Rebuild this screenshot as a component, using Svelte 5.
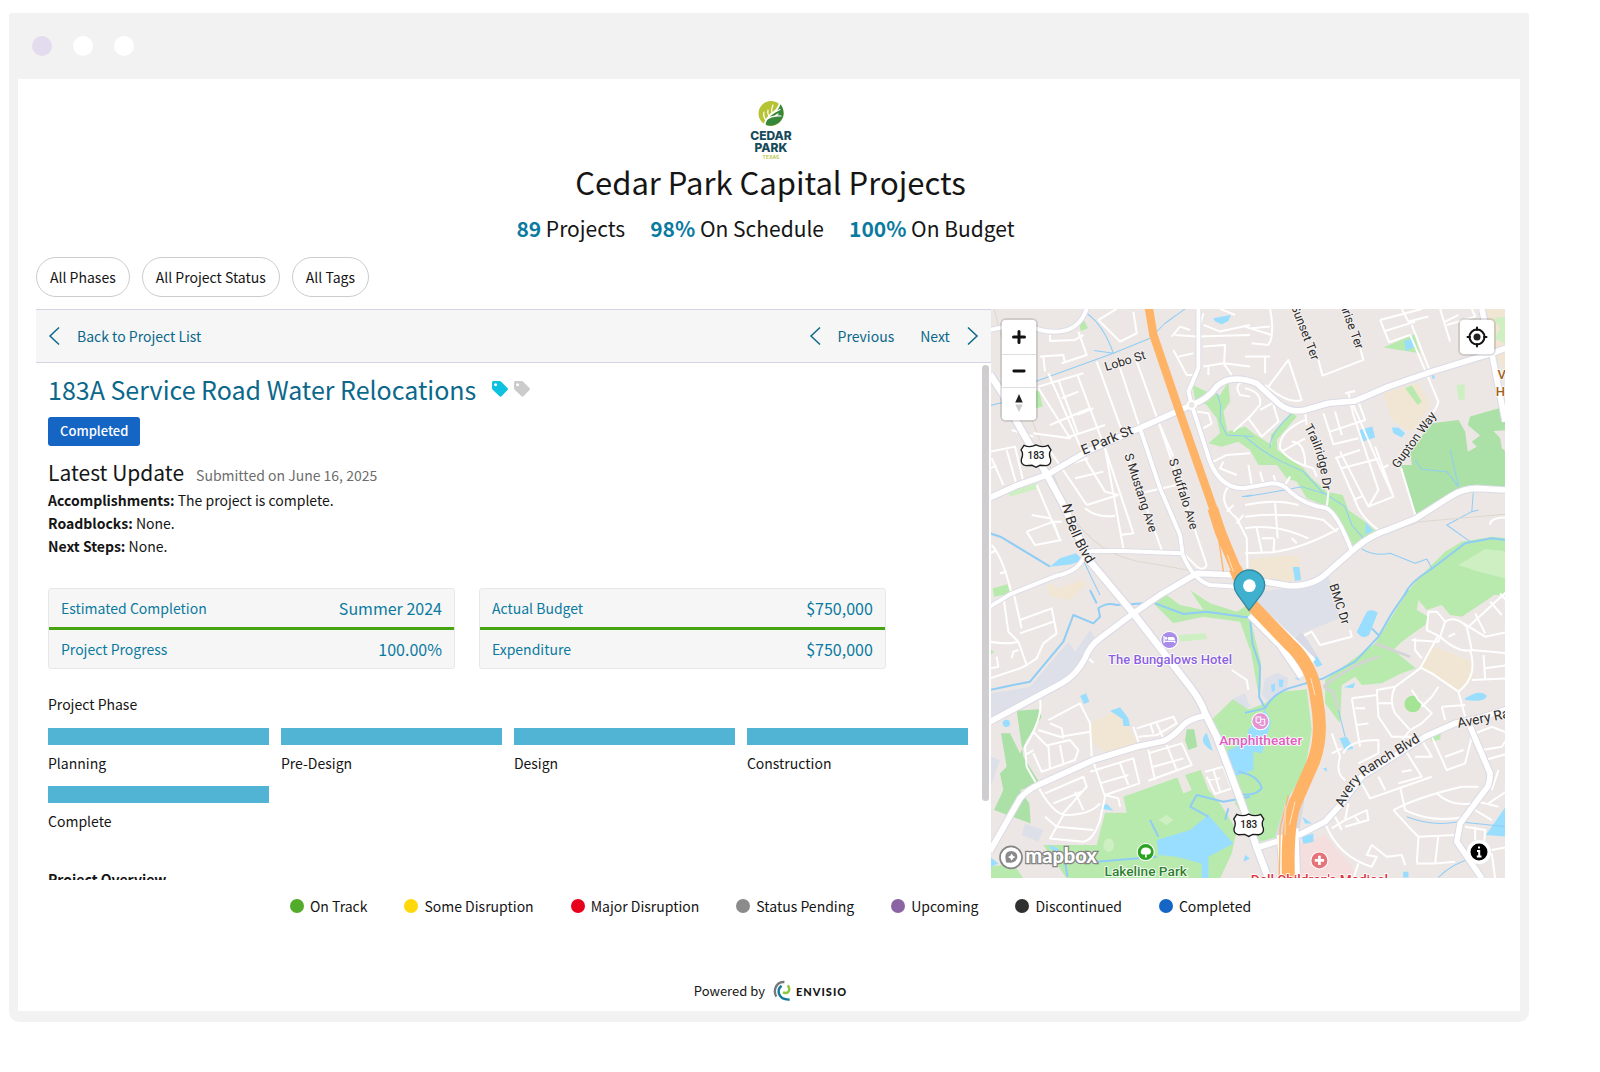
<script>
  const filters = ['All Phases', 'All Project Status', 'All Tags'];
  const stats = [
    { value: '89', label: 'Projects' },
    { value: '98%', label: 'On Schedule' },
    { value: '100%', label: 'On Budget' }
  ];
  const updates = [
    ['Accomplishments:', 'The project is complete.'],
    ['Roadblocks:', 'None.'],
    ['Next Steps:', 'None.']
  ];
  const cards = [
    [['Estimated Completion', 'Summer 2024'], ['Project Progress', '100.00%']],
    [['Actual Budget', '$750,000'], ['Expenditure', '$750,000']]
  ];
  const phases = ['Planning', 'Pre-Design', 'Design', 'Construction', 'Complete'];
  const legend = [
    ['On Track', 'green'],
    ['Some Disruption', 'yellow'],
    ['Major Disruption', 'red'],
    ['Status Pending', 'grey'],
    ['Upcoming', 'purple'],
    ['Discontinued', 'black'],
    ['Completed', 'blue']
  ];

  // Origins of the four map sheets: north-west, north-east, south-west, south-east.
  const sheets = ['translate(0 0)', 'translate(765 0)', 'translate(0 855)', 'translate(765 855)'];

  const areas = [
    ['industry', 0, 'M740 850 L800 860 L900 850 L1015 810 L1050 940 L900 1000 L800 900Z'],
    ['industry', 2, 'M0 310 L120 290 L235 155 L255 185 L300 120 L325 160 L270 230 L215 280 L0 392Z'],
    ['industry', 2, 'M0 497 L30 510 L0 595Z M105 700 L160 720 L145 755 L95 735Z M730 325 L765 310 L780 350 L740 365Z'],
    ['industry', 3, 'M60 265 L100 248 L130 265 L125 300 L70 335 L50 315Z'],
    ['sand', 0, 'M170 835 L190 840 L210 850 L280 822 L290 838 L240 885 L180 875Z'],
    ['sand', 1, 'M415 265 L520 232 L556 300 L500 382 L440 345Z M15 762 L160 750 L172 825 L110 832 L15 820Z M722 12 L790 12 L790 220 L750 150Z'],
    ['sand', 2, 'M302 398 L395 355 L440 462 L350 488 L302 455Z'],
    ['sand', 3, 'M562 168 L675 212 L685 262 L640 305 L527 230Z'],
    ['park', 0, 'M268 55 L282 46 L294 70 L272 78Z M130 255 L148 260 L158 305 L130 312Z M8 850 L52 838 L62 866 L12 875Z'],
    ['park', 0, 'M608 240 L645 258 L690 270 L715 230 L720 290 L700 320 L712 380 L765 365 L790 385 L845 420 L842 390 L905 322 L920 335 L860 405 L862 435 L940 490 L965 520 L1010 560 L1058 570 L1075 615 L1125 650 L1160 680 L1090 726 L1060 665 L1045 660 L1045 645 L1000 600 L950 580 L920 530 L890 520 L860 480 L805 480 L780 435 L745 410 L695 425 L655 415 L690 385 L680 340 L650 300 L615 285Z'],
    ['pale', 0, 'M55 562 L140 535 L146 550 L60 575Z M565 990 L645 985 L652 1002 L570 1010Z'],
    ['park', 1, 'M415 128 L508 88 L525 145Z M480 250 L500 242 L530 290 L518 300Z M480 870 L520 820 L600 740 L650 710 L740 695 L790 700 L790 870Z'],
    ['wood', 1, 'M562 355 L640 345 L660 380 L668 440 L695 425 L680 410 L705 392 L668 360 L675 335 L790 302 L790 375 L745 378 L765 400 L770 430 L790 445 L790 545 L690 545 L615 575 L515 635 L468 480 L500 480 L495 435Z'],
    ['pale', 1, 'M635 240 L658 237 L660 283 L640 285Z M745 40 L790 35 L790 120 L750 100 L765 70Z M640 780 L720 732 L790 740 L790 822 L700 800Z'],
    ['park', 2, 'M490 40 L530 15 L570 45 L640 60 L600 0 L660 40 L740 65 L780 40 L780 180 L750 95 L640 80 L550 100Z M0 175 L12 185 L0 195Z'],
    ['wood', 2, 'M80 362 L145 358 L155 380 L110 450 L90 490 L60 430 L33 430 L50 530 L30 550 L40 600 L12 660 L122 700 L118 640 L90 600 L150 580 L100 500Z M590 418 L612 418 L622 470 L595 480 L585 450Z'],
    ['park', 2, 'M655 398 L728 328 L790 368 L790 640 L740 590Z M400 620 L562 562 L580 610 L605 600 L585 555 L632 540 L655 600 L690 640 L740 720 L725 790 L690 865 L230 865 L160 765 L320 765 L345 668 L410 668Z M0 830 L70 820 L100 865 L0 865Z'],
    ['park', 3, 'M-20 370 L60 340 L110 305 L185 298 L200 420 L180 540 L120 640 L100 740 L45 755 L-30 640Z M0 80 L18 95 L48 220 L45 320 L38 300 L15 170Z M490 0 L740 0 L790 -30 L740 20 L650 80 L615 75 L590 45 L545 60 L520 30 L515 60 L550 80 L540 105 L505 130 L470 155 L445 180 L512 235 L470 250 L410 280 L350 285 L330 260 L290 285 L285 400 L240 340 L240 270 L390 160Z M555 435 L588 425 L585 448 L560 455Z'],
    ['bright', 3, 'M478 342 a25 25 0 1 0 50 0 a25 25 0 1 0 -50 0Z'],
    ['pale', 2, 'M505 690 L530 675 L550 690 L530 705Z M340 765 a16 20 0 1 0 32 0 a16 20 0 1 0 -32 0Z'],
    ['clinic', 3, 'M160 760 L240 735 L320 830 L330 865 L160 865Z'],
    ['lake', 0, 'M670 40 L722 30 L715 48 L695 58 L675 50Z M180 785 L210 760 L258 745 L278 765 L245 778Z'],
    ['lake', 1, 'M478 108 L502 100 L510 125 L482 138Z M342 375 L382 365 L390 398 L352 410Z M440 368 L460 368 L480 385 L470 398 L445 385Z M560 210 L568 212 L568 222 L561 220Z M143 786 L163 786 L168 825 L150 828Z M362 650 L383 678 L360 688Z'],
    ['lake', 2, 'M270 318 L288 310 L298 335 L282 342Z M360 362 L390 352 L415 385 L420 408 L400 408 L398 388Z M38 400 a10 10 0 1 0 22 0 a10 10 0 1 0 -22 0Z M650 428 Q620 455 668 483Z M330 655 L350 640 L370 662Z M500 750 L600 720 L655 675 L730 760 L655 800 L655 865 L635 865 L635 820 L560 800 L505 795Z M715 480 L740 470 L790 430 L790 540 L730 560 L712 520Z M0 800 L25 820 L0 832Z M178 765 L205 775 L205 790 L180 775Z M765 795 L780 805 L760 815Z'],
    ['lake', 3, 'M365 65 Q380 55 398 68 L372 135 Q350 150 335 125Z M170 152 L185 148 L232 225 L215 232Z M283 445 L305 440 L325 475 L300 482Z M296 292 L330 278 L325 295Z M660 325 Q705 295 725 318 Q720 338 660 330Z M785 645 L785 740 L722 735Z M170 740 L205 730 L205 755 L175 762Z M172 680 L200 700 L180 700Z M10 420 L60 360 L78 395 L50 490 L5 480Z M78 285 L90 280 L90 303 L80 305Z M100 268 L116 270 L112 292 L102 290Z M233 535 L245 533 L245 545Z M474 845 L490 845 L490 862 L474 862Z M148 265 L162 262 L164 272Z']
  ];

  const streams = [
    ['thin', 0, 'M130 232 L370 145 L480 100 L525 55 L585 12 M290 25 Q340 60 370 145 M312 137 L370 145 M0 302 L40 292 M680 265 L692 300 L690 350 L710 390 L790 395'],
    ['thin', 0, 'M280 765 Q300 810 330 870 M755 575 L785 570'],
    ['mid', 0, 'M0 685 L35 697 L180 785'],
    ['thin', 1, 'M0 395 Q50 440 110 470 L175 500 L230 560 L300 605 L320 660 L355 700 M75 430 Q70 390 140 325 M0 575 L90 560 L170 545 L250 570 M510 465 L530 493 L605 500 L640 545 M615 435 L628 490 L640 545 M685 555 L680 620 L700 615 M680 620 L605 660 L675 710 M350 732 Q390 755 435 745 L510 775 L545 762 L560 790'],
    ['mid', 1, 'M478 870 Q495 830 555 795 L660 715 L740 700 L790 706'],
    ['mid', 2, 'M0 300 L45 290 L120 275 L220 155 L250 75 L310 100 L330 80 L325 55 Q350 35 380 45 L490 38 L580 72 L650 65 L790 85 M320 40 L300 0 M600 650 L620 615 L700 635 L780 620 M600 650 L655 680 M705 690 L715 655 M500 800 L320 815 L225 810 M225 810 L232 860 M480 690 L505 740'],
    ['mid', 3, 'M488 0 L440 70 L400 140 L330 215 L235 265 L130 295 Q80 315 60 355 L0 368 M0 80 L15 85 L22 160 L45 230 L42 320 L60 355 M400 135 L380 115 M-20 545 Q40 555 50 595 Q30 620 -20 612'],
    ['thin', 3, 'M280 360 L300 440 M485 680 Q560 710 640 695 L790 710 M580 862 Q620 820 680 805']
  ];

  const lanes = [
    [0, 'M130 395 L65 375 M175 205 L290 470 L345 560 L385 570 M205 225 L265 390 M262 210 L345 430 L430 685 L390 690 M145 245 L262 210 L280 205 M320 170 L400 390 M385 175 L450 370 M440 170 L505 350 L550 455 M505 350 L650 780 Q640 800 620 785 L580 745 M410 445 L515 735 M345 430 L400 730 M145 250 L240 400 L130 385 M215 280 L265 260 M262 330 L310 310 M180 360 L300 310 M225 400 L345 360 M0 440 L75 425 L100 530 M50 435 L80 540 M5 460 L40 540 M0 490 L20 482'],
    [0, 'M175 430 L290 600 M230 480 L295 460 M255 520 L340 500 M290 600 L385 570 M285 610 Q320 640 375 632 M140 540 L210 705 M110 680 L190 650 L215 650 M110 680 L135 720 L215 705 M125 630 L180 640 M190 650 L210 705 M450 565 L560 540 M5 720 Q40 760 65 868 M0 745 L20 735 M30 805 L50 800'],
    [0, 'M180 90 L180 108 L255 105 L280 90 M150 155 L220 150 L225 175 M160 155 L165 200 M265 80 L290 150 L215 175 M325 45 L390 110 L440 85 L430 20 M325 45 L380 12 M640 25 L620 95 M555 90 L620 95 L780 90 M550 135 L590 210 L620 210 M565 155 L610 145 M640 125 L705 120 L702 175 L640 185 M702 175 L780 185 M655 185 L655 210 M700 175 L725 210 M640 60 L690 80 L780 60 M735 30 L690 12 M600 75 L570 65 L545 95 M620 320 L655 325 L665 355 L640 370 M780 335 L730 380 M700 470 L690 490 L740 510 M670 470 L710 450 L780 445 M760 230 Q730 240 750 270 L780 275'],
    [0, 'M715 545 Q680 590 740 640 L770 700 L772 790 M710 620 L730 600 M740 655 L760 630'],
    [1, 'M0 65 L80 90 M0 155 L75 155 M60 155 L60 205 M70 245 L130 165 L170 285 Q130 300 60 240 M0 250 Q50 260 45 300 L10 340 M45 315 L90 290 M10 340 L50 395 L100 350 L85 300 M75 12 Q90 90 70 120 L20 115 M20 70 L75 65 M220 165 L232 212 L355 165 L345 130 M470 12 L490 50 L550 35 M405 45 L530 12 M405 45 L432 112 L495 90 L580 290 Q570 325 550 330 M420 78 L510 50 M500 60 L555 200 M585 12 L615 110 M600 50 L640 30 M680 12 L690 35 L605 60'],
    [1, 'M180 320 L185 360 M310 265 L325 330 L400 555 L370 605 L285 440 M300 265 L330 258 M320 290 L395 465 L445 575 L370 605 M235 325 L265 418 L340 400 M270 320 L290 390 M255 380 L360 345 L340 290 M270 460 L345 435 M275 460 L330 585 Q345 635 400 675 M325 585 L355 572 M290 490 L405 460 M390 425 L445 575 M415 488 L430 480 M180 345 Q100 380 105 430 Q130 470 205 490 L215 515 M110 440 L180 400 M140 410 Q180 410 180 480 M468 490 L512 635 M245 608 L250 560'],
    [1, 'M0 600 Q90 580 160 600 M0 635 Q130 620 235 645 L275 680 M90 595 L98 700 M0 670 Q90 655 190 700 M0 745 L80 742 Q180 730 290 665 M35 670 L50 740 M50 700 L85 700 M85 742 L88 700 M140 700 L155 715 M735 660 Q735 635 790 638 M10 480 L20 540 M45 500 L55 535 M85 510 L95 540 M120 540 L135 515'],
    [2, 'M40 20 L55 125 L85 155 L110 225 L140 205 L160 160 L200 130 L185 55 L90 90 M70 5 L95 115 M90 130 L190 95 M85 155 Q50 165 0 155 M0 265 L90 235 L110 225 M0 235 L25 230 L20 200 M65 205 L70 185 L85 180'],
    [2, 'M150 330 Q160 380 105 470 L110 530 L150 600 Q190 670 225 675 Q300 675 330 640 M175 390 L270 340 L300 400 L305 500 M145 420 L210 440 L300 425 M130 425 Q180 480 175 465 L240 450 L265 480 L255 510 L155 545 L130 490 M175 465 L180 535 M210 465 L220 520 M180 400 L215 415 L220 445 M105 495 L130 480 M165 610 L280 560 L290 590 L215 675 M190 640 L275 605 M310 515 L345 620 L330 690 Q310 750 280 755 L180 745 L220 675 M345 615 L385 625 L390 650 M300 545 L430 505 L448 580 L345 615 M330 580 L415 555 M390 520 L415 585 M165 680 L200 710 L310 720 M255 605 L280 660'],
    [2, 'M430 410 L445 455 M440 415 L550 380 L560 400 L500 435 L445 440 M500 400 L520 445 M475 480 L495 570 M475 490 L575 460 L605 525 L475 572 M530 465 L560 540 M490 530 L580 505 M480 400 L490 430 M725 240 L770 270 L775 300 M290 200 L310 218 M645 545 L700 530 L725 595 L675 612 L650 560 M655 570 L690 565 M670 540 L690 605'],
    [3, 'M160 145 L200 125 L225 165 L320 140 L315 120 M500 150 L580 155 L600 95 Q630 75 665 110 L680 180 Q640 190 585 140 L545 120 L550 65 L575 65 L600 95 M510 145 L510 180 L530 205 M670 110 L790 0 M690 70 L720 130 M655 100 L720 140 L790 125 M680 180 L790 190 M715 195 L720 265 M720 235 L790 225 M680 270 L790 265 M610 140 L630 130 M765 10 L790 40 M735 35 L770 75'],
    [3, 'M580 135 L525 235 L450 290 Q430 330 450 370 L495 420 L530 400 L560 370 L520 330 L500 300 M675 180 Q700 260 640 305 L560 250 L525 232 M640 305 L660 380 M590 350 L660 345 M560 320 L580 290 M450 290 L395 300 L400 380 L440 440 L500 440 M320 325 L395 315 M320 325 L345 470 M330 355 L360 355 M335 405 L370 400 M495 420 L470 450 M400 340 L440 340 M560 320 L530 350 M590 350 L600 390'],
    [3, 'M260 430 L285 500 Q270 550 300 570 M295 490 Q310 450 400 450 L400 490 L340 520 M260 490 L290 475 M480 480 L530 560 L460 580 M350 580 L375 625 L560 560 M400 560 L420 600 M500 540 L470 545 M530 450 L560 500 L510 500 M560 440 L605 540 L660 520 L680 440 M600 500 L655 480 M690 430 L740 410 L790 430 M710 480 L770 470 L790 440 M720 510 L790 490'],
    [3, 'M445 660 Q520 620 650 590 L700 590 M445 660 L500 720 L520 740 L515 820 M465 590 L480 660 Q560 700 660 680 M575 610 Q620 650 680 640 M520 740 L630 735 M580 735 L570 820 L630 815 M515 820 L570 820 M660 710 L720 720 L715 790 M690 710 L690 750 M740 780 L790 770 M740 790 L750 865 M700 635 L760 650 M690 660 L740 690 M760 540 L740 600 M790 600 L730 640 M240 700 Q280 800 380 830 L395 800 L365 795 L380 765 L425 800 L470 795 L480 825 M300 690 L365 660 L370 690 L300 710 M260 715 L300 690 L310 640 M270 680 L290 720 M330 680 L345 700 M325 865 L340 820']
  ];

  const roads = [
    ['minor', 'M0 75 L60 62 Q120 62 150 75 Q260 100 290 12'],
    ['minor', 'M625 12 L625 190 L595 260 L605 300 L650 440 Q680 550 760 550 L845 535 Q880 535 900 560 Q945 600 1005 608 Q1040 620 1085 738'],
    ['minor', 'M450 370 L510 550 L570 690 L578 750 Q610 825 660 840 L740 845'],
    ['minor', 'M0 905 L60 868 L200 812 Q260 800 280 760 Q285 740 310 738 L400 738 L575 745'],
    ['medium', 'M0 578 L80 542 L170 510 L290 440 L430 378 L605 300 Q650 285 680 245 Q720 205 800 235 L865 295 Q900 325 945 315 L1015 295 L1095 288 L1195 245 L1325 200 L1505 145 L1560 125'],
    ['medium', 'M0 1250 L215 1135 Q260 1110 285 1060 Q300 1020 330 1000 L430 925 L510 870 L620 805 L740 810 L825 830 L895 842 Q970 845 1015 800 L1095 730 Q1140 690 1200 672 L1275 642 L1385 572 Q1420 550 1460 550 L1560 556'],
    ['medium', 'M0 1638 L90 1480 Q110 1455 150 1437 L310 1365 L440 1325 L520 1308 Q550 1295 580 1260 Q600 1240 645 1232'],
    ['medium', 'M800 1628 L930 1588 L1005 1550 L1055 1495 L1115 1415 L1305 1295 L1395 1255 L1465 1240 L1560 1210'],
    ['medium', 'M1475 12 L1505 145 L1545 350'],
    ['medium', 'M1440 1265 L1500 1405 Q1500 1440 1485 1455 L1410 1555 L1400 1610 L1475 1720'],
    ['large', 'M0 208 L40 270 L80 350 L160 490 L215 590 L300 770 L430 925 L600 1145 Q635 1190 645 1225 L680 1295 L770 1535 L800 1628 L835 1720']
  ];

  const highway = 'M475 0 L490 90 L565 310 L610 440 L680 640 L735 790 L785 900 L895 1015 Q970 1080 980 1185 Q1000 1290 970 1370 L915 1495 Q890 1560 895 1720';
</script>

{#snippet shield(x, y)}
  <g transform="translate({x} {y})">
    <path class="shield" d="M-36 -32 Q-18 -24 0 -33 Q18 -24 36 -32 L45 -18 Q36 -6 44 10 Q46 26 30 29 L12 28 L0 34 L-12 28 L-30 29 Q-46 26 -44 10 Q-36 -6 -45 -18Z" />
    <text class="shield-text" y="10">183</text>
  </g>
{/snippet}

{#snippet chevron(dir)}
  <svg class="chevron" viewBox="0 0 12 20" aria-hidden="true">
    <path d={dir === 'left' ? 'M11 1.500 L2 10 L11 18.500' : 'M1 1.500 L10 10 L1 18.500'} />
  </svg>
{/snippet}

{#snippet tag(tone)}
  <svg class="tag {tone}" viewBox="0 0 16 16" aria-hidden="true">
    <path fill-rule="evenodd" d="M1.500 0 H7.500 Q8.500 0 9.200.7 L15.500 7 Q16.400 8 15.500 9 L9.500 15.300 Q8.500 16.200 7.500 15.300 L.700 8.800 Q0 8 0 7.200 V1.500 Q0 0 1.500 0Z M3.600 2.200 a1.500 1.500 0 1 0 .010 0Z" />
  </svg>
{/snippet}

<div class="window">
  <div class="titlebar">
    <span class="dot lilac"></span><span class="dot"></span><span class="dot"></span>
  </div>

  <div class="page">
    <header>
      <svg class="city-logo" viewBox="0 0 48 60" role="img" aria-label="Cedar Park, Texas">
        <circle cx="24" cy="12.500" r="12.500" fill="#b5c334" />
        <path d="M33.500 3 Q38 9 36 16 Q31 27 19 24 Q18 19 21 16 Q31 12 33.500 3Z" fill="#37873a" />
        <g fill="none" stroke="#fff" stroke-linecap="round">
          <path d="M17 25 Q19 16 27 11 Q31 8 33 2" stroke-width="1.800" />
          <path d="M19 19 Q16 16 17 11 M25 12 Q24 8 26 4 M22 15 Q20 12 21 9 M24 13 L33 8.500 M20 18 Q26 14 34 15 M27 15.500 L31 13" stroke-width="1.200" />
        </g>
        <text class="city" x="24" y="39">CEDAR</text>
        <text class="city" x="24" y="51">PARK</text>
        <text class="state" x="24" y="58">TEXAS</text>
      </svg>
      <h1>Cedar Park Capital Projects</h1>
      <ul class="stats">
        {#each stats as s}
          <li><strong>{s.value}</strong> {s.label}</li>
        {/each}
      </ul>
    </header>

    <div class="filters">
      {#each filters as f}<button type="button">{f}</button>{/each}
    </div>

    <main>
      <section class="panel">
        <nav>
          <a href="#list">{@render chevron('left')}Back to Project List</a>
          <span class="pager">
            <a href="#previous">{@render chevron('left')}Previous</a>
            <a href="#next">Next{@render chevron('right')}</a>
          </span>
        </nav>
        <div class="detail">
          <div class="name">
            <h2>183A Service Road Water Relocations</h2>
            <span class="tags">{@render tag('cyan')}{@render tag('silver')}</span>
          </div>
          <span class="badge">Completed</span>
          <div class="latest">
            <h3>Latest Update</h3>
            <span>Submitted on June 16, 2025</span>
          </div>
          {#each updates as [k, v]}
            <p><strong>{k}</strong> {v}</p>
          {/each}
          <div class="cards">
            {#each cards as rows}
              <dl>
                {#each rows as [k, v]}
                  <div><dt>{k}</dt><dd>{v}</dd></div>
                {/each}
              </dl>
            {/each}
          </div>
          <h4>Project Phase</h4>
          <ul class="phases">
            {#each phases as p}<li><span class="bar"></span>{p}</li>{/each}
          </ul>
          <h4 class="overview">Project Overview</h4>
        </div>
        <span class="scroll"></span>
      </section>

      <section class="map" aria-label="Project map">
        <svg class="canvas" viewBox="3 12 1542 1707" preserveAspectRatio="xMidYMid slice">
          {#each areas as [kind, sheet, d]}
            <path class={kind} transform={sheets[sheet]} {d} />
          {/each}
          {#each streams as [kind, sheet, d]}
            <path class="stream {kind}" transform={sheets[sheet]} {d} />
          {/each}
          <path class="rail" d="M12 12 L50 150 L230 610 Q320 760 480 775 L620 800 M1120 710 L1290 650 L1545 628" />
          <path class="trail" d="M1000 1145 Q1080 1080 1165 1055 M1000 1145 L1030 1160 L1045 1215 M1155 1015 L1260 1055" />
          {#each lanes as [sheet, d]}
            <path class="lane" transform={sheets[sheet]} {d} />
          {/each}
          {#each roads as [size, d]}<path class="casing {size}" {d} />{/each}
          <path class="casing large" d="M780 930 L870 1020 L935 1115 M925 990 L970 1060 M905 1480 L870 1590 L880 1720 M930 1480 L915 1570 L920 1720" />
          {#each roads as [size, d]}<path class="road {size}" {d} />{/each}
          <path class="road large" d="M780 930 L870 1020 L935 1115 M800 905 L900 1000 L970 1070 M870 1590 L880 1720 M915 1570 L920 1720" />
          <circle class="roundabout" cx="605" cy="300" r="12" />
          <path class="highway" d={highway} />
          <path class="highway wide" d="M735 790 L785 900 L895 1015 Q970 1080 980 1185 Q1000 1290 970 1370 L915 1495 Q890 1560 895 1720" />
          <path class="highway merge" d="M668 610 L690 680 L745 810 L770 860" />
          <path class="ramp" d="M684 690 L700 800 M895 1470 L870 1570 L868 1720" />
          <path class="seam" d="M885 1500 L885 1590 M962 1120 L975 1170 M915 1490 L898 1560 M712 750 L730 800 M745 850 L775 895" />

          <g class="label">
            <text class="small" transform="translate(405 168) rotate(-17)">Lobo St</text>
            <text transform="translate(350 404) rotate(-23)">E Park St</text>
            <text class="small" transform="translate(452 563) rotate(72)">S Mustang Ave</text>
            <text class="small" transform="translate(580 567) rotate(73)">S Buffalo Ave</text>
            <text class="small" transform="translate(945 82) rotate(69)">Sunset Ter</text>
            <text class="small" transform="translate(1078 44) rotate(70)">Sunrise Ter</text>
            <text class="small" transform="translate(1272 405) rotate(-54)">Gupton Way</text>
            <text class="small" transform="translate(1048 897) rotate(72)">BMC Dr</text>
            <text transform="translate(1512 1232) rotate(-11)">Avery Ranch</text>
            <path id="bell" d="M216 600 Q236 700 310 804" fill="none" />
            <path id="trail" d="M942 366 Q998 460 1000 590" fill="none" />
            <path id="avery" d="M1060 1508 Q1090 1430 1150 1395 L1325 1287" fill="none" />
            <text class="along"><textPath href="#bell">N Bell Blvd</textPath></text>
            <text class="along small"><textPath href="#trail">Trailridge Dr</textPath></text>
            <text class="along"><textPath href="#avery">Avery Ranch Blvd</textPath></text>
          </g>
          <text class="poi brown" x="1535" y="223">V</text>
          <text class="poi brown" x="1531" y="273">H</text>

          {@render shield(138, 453)}
          {@render shield(776, 1560)}

          <circle cx="538" cy="1005" r="27" fill="#fff" />
          <circle cx="538" cy="1005" r="24" fill="#a98be8" />
          <path d="M522 993 V1014 M522 1009 H554 V1014" fill="none" stroke="#fff" stroke-width="4" />
          <path d="M534 996 H548 Q555 997 555 1006 H534Z" fill="#fff" />
          <circle cx="528" cy="1000" r="4" fill="#fff" />
          <text class="poi violet" x="540" y="1077">The Bungalows Hotel</text>

          <circle cx="811" cy="1249" r="27" fill="#fff" />
          <circle cx="811" cy="1249" r="24" fill="#e493d3" />
          <path d="M798 1236 H812 V1250 Q805 1258 798 1250Z M812 1243 H824 V1259 Q817 1265 809 1257 M802 1241 v2 M808 1241 v2 M814 1250 v2 M820 1250 v2" fill="none" stroke="#fff" stroke-width="3" />
          <text class="poi wide pink" x="812" y="1320">Amphitheater</text>

          <circle cx="467" cy="1641" r="27" fill="#fff" />
          <circle cx="467" cy="1641" r="24" fill="#2ba31f" />
          <path d="M465 1657 V1648 H458 Q450 1646 453 1637 Q456 1626 468 1627 Q481 1627 483 1638 Q483 1647 476 1648 H470 V1657Z" fill="#fff" />
          <text class="poi wide forest" x="467" y="1712">Lakeline Park</text>

          <circle cx="988" cy="1666" r="27" fill="#fff" />
          <circle cx="988" cy="1666" r="24" fill="#e5737a" />
          <path d="M988 1652 V1680 M974 1666 H1002" stroke="#fff" stroke-width="8" />
          <text class="poi wide crimson" x="988" y="1738">Dell Children's Medical</text>

          <g>
            <path d="M777 916 L742 868 Q732 855 732 841 A46 46 0 0 1 824 841 Q824 855 814 868Z" fill="#3fb1ce" stroke="#31899f" stroke-width="4" />
            <circle cx="778" cy="842" r="19" fill="#fff" />
          </g>

          <g>
            <circle cx="63" cy="1657" r="33" fill="#fff" stroke="#858585" stroke-width="5" />
            <path d="M48 1672 L46 1655 Q47 1639 63 1638 Q82 1640 82 1656 Q80 1671 64 1673Z" fill="#8a8a8a" />
            <path d="M65 1645 L69 1652 L76 1656 L69 1660 L65 1667 L61 1660 L54 1656 L61 1652Z" fill="#fff" />
            <text class="brand" x="106" y="1674">mapbox</text>
          </g>
        </svg>

        <div class="zoom">
          <button type="button" aria-label="Zoom in">
            <svg viewBox="0 0 34 34"><path d="M17 11.500 V22.500 M11.500 17 H22.500" /></svg>
          </button>
          <button type="button" aria-label="Zoom out">
            <svg viewBox="0 0 34 34"><path d="M11.500 17 H22.500" /></svg>
          </button>
          <button type="button" aria-label="Reset bearing">
            <svg viewBox="0 0 34 34"><path class="north" d="M17 6.500 L21 15.500 H13Z" /><path class="south" d="M13 17.500 H21 L17 25.500Z" /></svg>
          </button>
        </div>
        <button class="locate" type="button" aria-label="Find my location">
          <svg viewBox="0 0 34 34">
            <circle cx="17" cy="17" r="7.500" /><circle class="core" cx="17" cy="17" r="3.500" />
            <path d="M17 7.500 V10 M17 24 V26.500 M7.500 17 H10 M24 17 H26.500" />
          </svg>
        </button>
        <button class="info" type="button" aria-label="Map attribution">
          <svg viewBox="0 0 24 24">
            <circle cx="12" cy="12" r="8.500" /><path d="M12 6.500 V8.500 M10 11 H12.200 V16.500 M9.800 16.500 H14.500" />
          </svg>
        </button>
      </section>
    </main>

    <ul class="legend">
      {#each legend as [name, tone]}
        <li><span class="status {tone}"></span>{name}</li>
      {/each}
    </ul>

    <footer>
      <span>Powered by</span>
      <svg class="envisio" viewBox="0 0 20 22" aria-hidden="true">
        <path d="M12 1.500 Q5 1 2.500 8 Q1 13 3.500 17" stroke="#77787b" />
        <path d="M9 5.500 Q4.500 9 6.500 14.500 Q9 20.500 17.500 20" stroke="#15779b" />
        <path d="M15.500 5 Q18.500 9 16 12 Q13.500 14 10.500 12.500" stroke="#8cc63f" />
      </svg>
      <b>ENVISIO</b>
    </footer>
  </div>
</div>

<style>
  :global(body) { background: #fff; }
  .window, button {
    font-family: 'Noto Sans CJK SC', 'Noto Sans', sans-serif;
    font-size: 14px;
    line-height: 24px;
    color: #151515;
  }
  ul, dl, dd, h1, h2, h3, h4, p { margin: 0; padding: 0; font-weight: 400; }
  ul { list-style: none; }
  a { color: #0b688b; text-decoration: none; }
  .window { margin: 13px 71px 48px 9px; padding: 0 9px 11px; background: #f2f2f2; border-radius: 3px 3px 10px 10px; }
  .titlebar { display: flex; align-items: center; gap: 21px; height: 66px; padding-left: 14px; }
  .dot { width: 20px; height: 20px; border-radius: 50%; background: #fff; }
  .dot.lilac { background: #e2dcee; }
  .page { background: #fff; padding: 22px 15px 8px 18px; }

  header { display: flex; flex-direction: column; align-items: center; }
  .city-logo { width: 48px; height: 60px; }
  .city { font: 800 12px Inter, sans-serif; fill: #174a5b; text-anchor: middle; }
  .state { font: 600 5px Inter, sans-serif; fill: #b5c334; text-anchor: middle; }
  h1 { font-size: 31px; line-height: 42px; }
  .stats { display: flex; gap: 25px; margin: 8px 10px 12px 0; font-size: 21px; line-height: 34px; }
  .stats strong { color: #0b7aa0; }

  .filters { display: flex; gap: 12px; margin-bottom: 12px; }
  .filters button { height: 40px; padding: 0 13px; border: 1px solid #ccc; border-radius: 20px; background: #fff; }

  main { display: grid; grid-template-columns: 13fr 7fr; height: 571px; }
  .panel { position: relative; display: flex; flex-direction: column; overflow: hidden; }
  nav { display: flex; justify-content: space-between; padding: 14px 12px; background: #f6f6f6; border-top: 1px solid #d3d5e4; border-bottom: 1px solid #d3d5e4; }
  nav a { display: flex; align-items: center; gap: 17px; }
  .pager { display: flex; gap: 26px; }
  .chevron { width: 12px; height: 20px; fill: none; stroke: #0b688b; stroke-width: 1.500; }
  .detail { flex: 1; min-height: 0; overflow: hidden; padding: 8px 23px 0 12px; }
  .name { display: flex; align-items: center; gap: 16px; }
  h2 { font-size: 25px; line-height: 36px; color: #0b688b; }
  .tags { display: flex; gap: 6px; }
  .tag { width: 16px; height: 16px; }
  .cyan { fill: #0cc2de; }
  .silver { fill: #cbcbcb; }
  .badge { display: inline-block; margin-top: 10px; padding: 2px 12px 3px; border-radius: 3px; background: #1565c5; color: #fff; font-size: 13px; font-weight: 500; }
  .latest { display: flex; align-items: baseline; gap: 12px; margin: 10px 0 1px; }
  h3 { font-size: 21px; line-height: 32px; }
  .latest span { color: #6d6d6d; }
  p { line-height: 23px; }
  .cards { display: flex; gap: 24px; margin: 30px 82px 23px 0; }
  dl { flex: 1; border: 1px solid #e8e8e8; border-radius: 3px; background: #f6f6f6; color: #0b7aa0; }
  dl div { display: flex; justify-content: space-between; align-items: center; height: 38px; padding: 0 12px; }
  dl div + div { border-top: 3px solid #47a411; }
  dd { font-size: 16px; }
  .phases { display: grid; grid-template-columns: repeat(4, 1fr); gap: 11px 12px; margin-top: 12px; }
  .bar { display: block; height: 17px; margin-bottom: 6px; background: #51b4d5; }
  h4 { font-size: 14px; line-height: 24px; }
  .overview { margin-top: 34px; font-weight: 700; }
  .scroll { position: absolute; top: 56px; right: 2px; width: 7px; height: 436px; border-radius: 4px; background: #cfcdcf; }

  .map { position: relative; height: 569px; overflow: hidden; background: #ece7e5; }
  .canvas { display: block; width: 100%; height: 100%; }
  .industry { fill: #dee0e9; }
  .sand { fill: #f0e6d3; }
  .park { fill: #b8eaae; }
  .wood { fill: #abe0a6; }
  .bright { fill: #a4e495; }
  .pale { fill: #cdefc2; }
  .clinic { fill: #f5dede; }
  .lake { fill: #99ddff; }
  .stream { fill: none; stroke: #8fcdf5; stroke-linejoin: round; }
  .stream.thin { stroke-width: 3; }
  .stream.mid { stroke-width: 6; }
  .rail { fill: none; stroke: #ddd8cd; stroke-width: 3; }
  .trail { fill: none; stroke: #d6d3d6; stroke-width: 8; stroke-linejoin: round; }
  .lane { fill: none; stroke: #fff; stroke-width: 6; stroke-linejoin: round; }
  .road, .casing { fill: none; stroke-linejoin: round; }
  .casing { stroke: #dadae6; }
  .road { stroke: #fff; }
  .road.minor { stroke-width: 12; }
  .road.medium { stroke-width: 17; }
  .road.large { stroke-width: 20; }
  .casing.minor { stroke-width: 17; }
  .casing.medium { stroke-width: 23; }
  .casing.large { stroke-width: 27; }
  .roundabout { fill: #ece7e5; stroke: #fff; stroke-width: 7; }
  .highway { fill: none; stroke: #ffb366; stroke-width: 25; stroke-linejoin: round; }
  .highway.wide { stroke-width: 39; }
  .highway.merge { stroke-width: 32; }
  .ramp { fill: none; stroke: #ffb366; stroke-width: 4; }
  .seam { fill: none; stroke: #ffe0bf; stroke-width: 3; }
  .label text { font: 41px Roboto, sans-serif; fill: #2b2b2b; stroke: #f5f2f1; stroke-width: 6; paint-order: stroke; text-anchor: middle; dominant-baseline: central; }
  .label .small { font-size: 37px; }
  .label .along { text-anchor: start; dominant-baseline: auto; }
  .poi { font: 500 39px Roboto, sans-serif; stroke: #fff; stroke-width: 5; paint-order: stroke; text-anchor: middle; }
  .poi.wide { font-size: 41px; }
  .violet { fill: #8b61e0; }
  .pink { fill: #e35cc0; }
  .forest { fill: #2c7f2c; }
  .crimson { fill: #dd3340; }
  .brown { fill: #a3621b; }
  .shield { fill: #fff; stroke: #1c1c1c; stroke-width: 4; }
  .shield-text { font: 500 30px Roboto, sans-serif; fill: #1c1c1c; text-anchor: middle; }
  .brand { font: 900 60px Lato, sans-serif; fill: #fff; stroke: #858585; stroke-width: 8; paint-order: stroke; }

  .zoom, .locate { position: absolute; top: 11px; border-radius: 4px; background: #fff; box-shadow: 0 0 0 2px rgb(0 0 0 / 12%); overflow: hidden; }
  .zoom { left: 11px; width: 34px; }
  .map button { display: block; width: 34px; height: 34px; padding: 0; border: 0; background: #fff; }
  .zoom button + button { height: 33px; border-top: 1px solid #ddd; }
  .map .locate { right: 11px; }
  .map .info { position: absolute; right: 14px; bottom: 14px; width: 24px; height: 24px; border-radius: 50%; }
  .map button svg { display: block; width: 100%; height: 100%; fill: none; stroke: #111; stroke-width: 3; stroke-linecap: round; }
  .map .locate svg { stroke-width: 2; }
  .map .core { fill: #222; stroke: none; }
  .map .north { fill: #222; stroke: none; }
  .map .south { fill: #ccc; stroke: none; }
  .map .info circle { fill: #000; stroke: none; }
  .map .info path { stroke: #fff; stroke-width: 2; stroke-linecap: butt; }

  .legend { display: flex; justify-content: center; flex-wrap: wrap; gap: 37px; margin: 14px 0 61px; }
  .legend li { display: flex; align-items: center; gap: 6px; }
  .status { width: 14px; height: 14px; border-radius: 50%; }
  .green { background: #52ab2b; }
  .yellow { background: #ffd80a; }
  .red { background: #e6001c; }
  .grey { background: #8b8b8b; }
  .purple { background: #8c64a4; }
  .black { background: #303030; }
  .blue { background: #1565c5; }

  footer { display: flex; justify-content: center; align-items: center; gap: 8px; font-size: 13px; }
  .envisio { width: 19px; height: 22px; fill: none; stroke-width: 2.500; }
  footer b { margin-left: -4px; font: 900 11px Lato, sans-serif; letter-spacing: 1px; }
</style>
